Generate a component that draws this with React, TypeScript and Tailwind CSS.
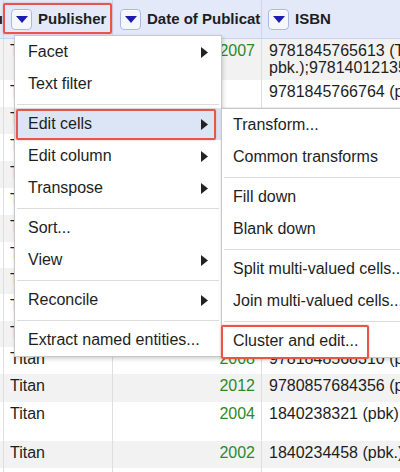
import React from "react";

type Row = { h: string; gray: boolean; pub: string; year: string; isbn: string[] };

const rows: Row[] = [
  { h: "h-[41px]", gray: true, pub: "Titan", year: "2007", isbn: ["9781845765613 (Titan ;", "pbk.);9781401213565 (DC Comics ; pbk.)"] },
  { h: "h-[27px]", gray: false, pub: "Titan", year: "", isbn: ["9781845766764 (pbk.)"] },
  { h: "h-[27px]", gray: true, pub: "Titan", year: "", isbn: [] },
  { h: "h-[27px]", gray: false, pub: "Titan", year: "", isbn: [] },
  { h: "h-[27px]", gray: true, pub: "Titan", year: "", isbn: [] },
  { h: "h-[27px]", gray: false, pub: "Titan", year: "", isbn: [] },
  { h: "h-[27px]", gray: true, pub: "Titan", year: "", isbn: [] },
  { h: "h-[26px]", gray: false, pub: "Titan", year: "", isbn: [] },
  { h: "h-[26px]", gray: true, pub: "Titan", year: "", isbn: [] },
  { h: "h-[27px]", gray: false, pub: "Titan", year: "", isbn: [] },
  { h: "h-[26px]", gray: true, pub: "Titan", year: "", isbn: [] },
  { h: "h-[27px]", gray: false, pub: "Titan", year: "2008", isbn: ["9781848568310 (pbk.)"] },
  { h: "h-[28px]", gray: true, pub: "Titan", year: "2012", isbn: ["9780857684356 (pbk.)"] },
  { h: "h-[39px]", gray: false, pub: "Titan", year: "2004", isbn: ["1840238321 (pbk)"] },
  { h: "h-[27px]", gray: true, pub: "Titan", year: "2002", isbn: ["1840234458 (pbk.);1840234512"] },
  { h: "h-[28px]", gray: false, pub: "Titan", year: "2001", isbn: ["1840233419 (pbk.)"] },
];

function DropBtn() {
  return (
    <div className="w-[21px] h-[21px] shrink-0 rounded-[4px] border border-[#aab8e4] bg-[#f5f7fd] flex items-center justify-center shadow-[inset_0_1px_0_#fff]">
      <svg width="12" height="7" viewBox="0 0 12 7">
        <polygon points="0,0 12,0 6,7" fill="#1c1cb0" />
      </svg>
    </div>
  );
}

function Arrow() {
  return (
    <svg width="7" height="11" viewBox="0 0 7 11" className="shrink-0">
      <polygon points="0,0 7,5.5 0,11" fill="#222" />
    </svg>
  );
}

function Item({ label, arrow, hl }: { label: string; arrow?: boolean; hl?: boolean }) {
  return (
    <div className={`relative h-[32px] flex items-center justify-between pl-[13px] pr-[13px] ${hl ? "bg-[#dbe5f6]" : ""}`}>
      <span className="whitespace-nowrap">{label}</span>
      {arrow && <Arrow />}
      {hl && (
        <div className="absolute left-[1px] right-[5px] top-[1px] bottom-[0px] border-2 border-[#e8564b] rounded-[2px] shadow-[0_0_2px_rgba(232,86,75,0.5)]" />
      )}
    </div>
  );
}

function SubItem({ label, hl }: { label: string; hl?: boolean }) {
  return (
    <div className="relative h-[32px] flex items-center pl-[11px]">
      <span className="whitespace-nowrap">{label}</span>
      {hl && (
        <div className="absolute left-[-1px] w-[148px] top-0 h-[34px] border-2 border-[#e8564b] rounded-[2px] shadow-[0_0_2px_rgba(232,86,75,0.5)]" />
      )}
    </div>
  );
}

function Sep() {
  return (
    <div className="h-[8px] flex items-center px-[2px]">
      <div className="h-px w-full bg-[#dcdcdc]" />
    </div>
  );
}

export default function App() {
  return (
    <div className="relative w-[400px] h-[472px] overflow-hidden bg-white text-[#1e1e1e] text-[16px] font-['Liberation_Sans',Arial,sans-serif]">
      {/* Header */}
      <div className="flex h-[39px] bg-[#e3e9f9] border-b border-[#c9d3ee]">
        <div className="w-[4px] shrink-0 overflow-hidden flex justify-end items-center border-r border-[#cdd6ef]">
          <span className="font-bold text-[15px] whitespace-nowrap">Menu</span>
        </div>
        <div className="w-[109px] shrink-0 relative flex items-center gap-[6px] pl-[7px] border-r border-[#cdd6ef]">
          <DropBtn />
          <span className="font-bold text-[15px] whitespace-nowrap">Publisher</span>
          <div className="absolute left-[-1px] top-[3px] w-[109px] h-[31px] border-2 border-[#e8564b] rounded-[2px] shadow-[0_0_2px_rgba(232,86,75,0.5)]" />
        </div>
        <div className="w-[149px] shrink-0 flex items-center gap-[6px] pl-[7px] overflow-hidden border-r border-[#cdd6ef]">
          <DropBtn />
          <span className="font-bold text-[15px] whitespace-nowrap">Date of Publication</span>
        </div>
        <div className="w-[220px] shrink-0 flex items-center gap-[6px] pl-[6px]">
          <DropBtn />
          <span className="font-bold text-[15px] whitespace-nowrap">ISBN</span>
        </div>
      </div>

      {/* Rows */}
      <div className="flex flex-col">
        {rows.map((r, i) => (
          <div key={i} className={`flex ${r.h} ${r.gray ? "bg-[#f2f2f2]" : "bg-white"}`}>
            <div className="w-[4px] shrink-0 border-r border-[#dedede]" />
            <div className="w-[109px] shrink-0 pl-[6px] pt-[3px] leading-[17px] border-r border-[#dedede] whitespace-nowrap overflow-hidden">
              {r.pub}
            </div>
            <div className="w-[149px] shrink-0 pr-[6px] pt-[3px] leading-[17px] text-right text-[#2a8a2a] border-r border-[#dedede]">
              {r.year}
            </div>
            <div className="w-[240px] shrink-0 pl-[7px] pt-[3px] leading-[17px] overflow-hidden">
              {r.isbn.map((l, j) => (
                <div key={j} className="whitespace-nowrap">{l}</div>
              ))}
            </div>
          </div>
        ))}
      </div>

      {/* Column menu */}
      <div className="absolute left-[14px] top-[35px] w-[208px] bg-white border border-[#c8c8c8] shadow-[1px_2px_4px_rgba(0,0,0,0.18)]">
        <Item label="Facet" arrow />
        <Item label="Text filter" />
        <Sep />
        <Item label="Edit cells" arrow hl />
        <Item label="Edit column" arrow />
        <Item label="Transpose" arrow />
        <Sep />
        <Item label="Sort..." />
        <Item label="View" arrow />
        <Sep />
        <Item label="Reconcile" arrow />
        <Sep />
        <Item label="Extract named entities..." />
      </div>

      {/* Submenu */}
      <div className="absolute left-[221px] top-[108px] w-[200px] bg-white border border-[#c8c8c8] shadow-[1px_2px_4px_rgba(0,0,0,0.18)]">
        <SubItem label="Transform..." />
        <SubItem label="Common transforms" />
        <Sep />
        <SubItem label="Fill down" />
        <SubItem label="Blank down" />
        <Sep />
        <SubItem label="Split multi-valued cells..." />
        <SubItem label="Join multi-valued cells..." />
        <Sep />
        <SubItem label="Cluster and edit..." hl />
      </div>
    </div>
  );
}
